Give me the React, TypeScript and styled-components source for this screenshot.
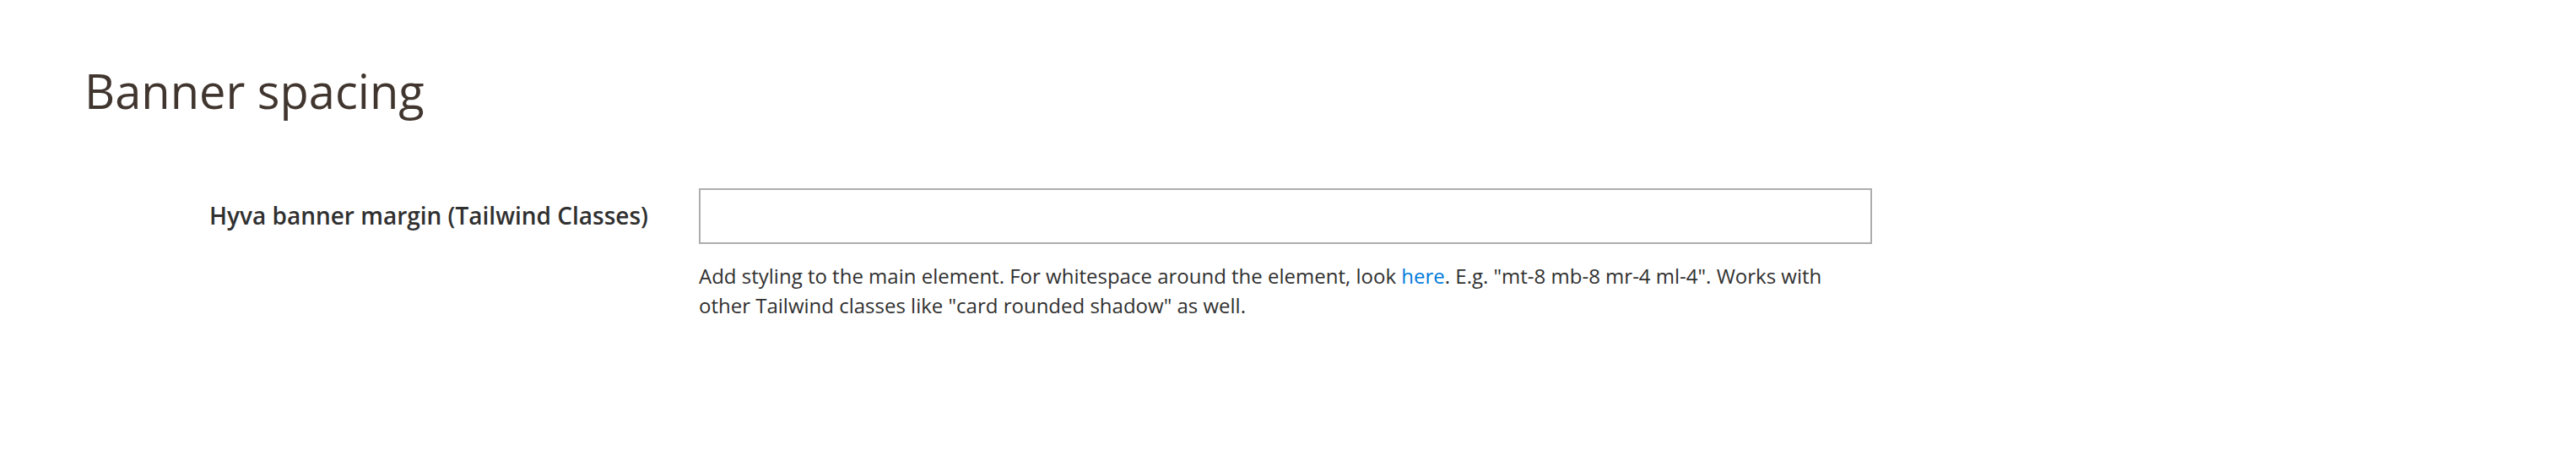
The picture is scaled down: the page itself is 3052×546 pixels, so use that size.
import React from 'react'
import styled, { createGlobalStyle } from 'styled-components'

const GlobalStyle = createGlobalStyle`
  html,
  body {
    margin: 0;
    padding: 0;
    background: #ffffff;
  }

  body {
    font-family: 'Open Sans', 'Noto Sans', Arial, sans-serif;
    color: #303030;
  }
`

const Page = styled.div`
  min-height: 546px;
  box-sizing: border-box;
  padding: 74px 0 0 100px;
`

const Legend = styled.h2`
  margin: 0 0 82px;
  font-size: 56px;
  font-weight: 400;
  line-height: 1.2;
  color: #41362f;
`

const FieldRow = styled.div`
  display: grid;
  grid-template-columns: 728px 1390px;
  row-gap: 20px;
`

const Label = styled.label`
  grid-row: 1;
  align-self: center;
  padding-right: 60px;
  text-align: right;
  font-size: 28px;
  font-weight: 600;
  line-height: 1.2;
  color: #303030;
`

const TextInput = styled.input`
  grid-row: 1;
  box-sizing: border-box;
  width: 100%;
  height: 66px;
  margin: 0;
  padding: 0 20px;
  border: 2px solid #adadad;
  border-radius: 0;
  background: #ffffff;
  font-family: inherit;
  font-size: 28px;
  color: #303030;
  outline: none;
`

const Note = styled.div`
  grid-column: 2;
  font-size: 24px;
  line-height: 35px;
  color: #303030;
`

const NoteLink = styled.a`
  color: #007bdb;
  text-decoration: none;
`

export default function App() {
  return (
    <>
      <GlobalStyle />
      <Page>
        <Legend>Banner spacing</Legend>
        <FieldRow>
          <Label htmlFor="hyva-banner-margin">Hyva banner margin (Tailwind Classes)</Label>
          <TextInput id="hyva-banner-margin" type="text" />
          <Note>
            Add styling to the main element. For whitespace around the element, look{' '}
            <NoteLink href="#">here</NoteLink>. E.g. "mt-8 mb-8 mr-4 ml-4". Works with other Tailwind
            classes like "card rounded shadow" as well.
          </Note>
        </FieldRow>
      </Page>
    </>
  )
}
